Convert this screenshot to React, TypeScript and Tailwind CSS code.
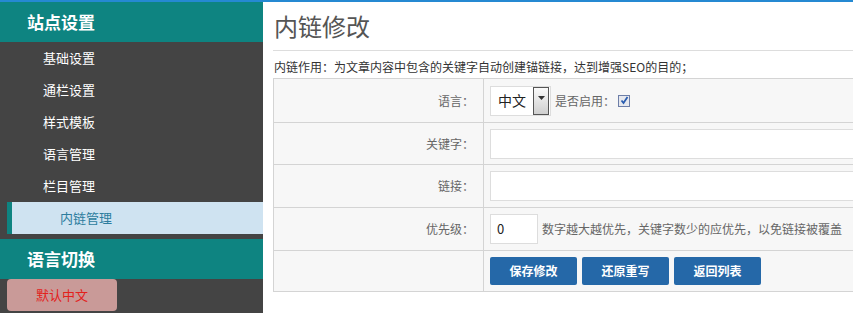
import React from "react";

const menu = ["基础设置", "通栏设置", "样式模板", "语言管理", "栏目管理"];

const Label: React.FC<{ text: string }> = ({ text }) => (
  <div className="flex items-center justify-end pr-[9px] border-r border-[#d4d4d4] text-[12px] text-[#666]">{text}</div>
);

const App: React.FC = () => {
  return (
    <div className="w-[853px] h-[313px] flex flex-col overflow-hidden bg-white font-['Noto_Sans_CJK_SC',sans-serif]">
      <div className="h-[2px] bg-[#2589d2]" />
      <div className="flex flex-1">
        {/* sidebar */}
        <div className="w-[263px] bg-[#444] flex flex-col">
          <div className="h-[40px] bg-[#0e8481] flex items-center pl-[27px] text-white text-[17px] font-bold">站点设置</div>
          {menu.map((m) => (
            <div key={m} className="h-[32px] flex items-center pl-[43px] text-white text-[13px]">
              {m}
            </div>
          ))}
          <div className="h-[32px] ml-[7px] border-l-[5px] border-[#0e8481] bg-[#cfe3f1] flex items-center pl-[48px] text-[13px] text-[#2d7d9e]">
            内链管理
          </div>
          <div className="h-[40px] mt-[5px] bg-[#0e8481] flex items-center pl-[27px] text-white text-[17px] font-bold">语言切换</div>
          <div className="ml-[7px] w-[110px] h-[32px] rounded-[4px] bg-[#c99a98] flex items-center justify-center text-[13px] text-[#e3211c]">
            默认中文
          </div>
        </div>

        {/* main */}
        <div className="flex-1 pl-[10px] overflow-hidden">
          <div className="h-[49px] border-b border-[#ddd] flex items-center pl-[1px] text-[24px] text-[#555] w-[600px]">内链修改</div>
          <div className="h-[27px] flex items-end pb-[2px] pl-[1px] text-[12px] text-[#333]">
            内链作用：为文章内容中包含的关键字自动创建锚链接，达到增强SEO的目的；
          </div>
          <div className="w-[600px] border border-[#d4d4d4] bg-[#f7f7f7] grid grid-cols-[210px_1fr] grid-rows-[43px_42px_43px_43px_41px]">
            <Label text="语言：" />
            <div className="flex items-center pl-[6px]">
              <div className="w-[61px] h-[30px] bg-white border border-[#ddd] flex items-center justify-between pl-[7px] pr-[1px]">
                <span className="text-[14px] text-[#222]">中文</span>
                <span className="w-[16px] h-[28px] border border-[#555] bg-gradient-to-b from-[#fafafa] to-[#cfcfcf] flex items-start justify-center pt-[8px]">
                  <svg width="7" height="4" viewBox="0 0 7 4"><path d="M0 0h7L3.5 4z" fill="#333" /></svg>
                </span>
              </div>
              <span className="ml-[4px] text-[12px] text-[#666]">是否启用：</span>
              <span className="ml-[3px] w-[12px] h-[12px] border border-[#6d7ea8] bg-[#e6e8ee] flex items-center justify-center">
                <svg width="9" height="9" viewBox="0 0 9 9"><path d="M1.5 4.5l2 2.5L7.5 1" fill="none" stroke="#2a5db0" strokeWidth="1.8" /></svg>
              </span>
            </div>

            <div className="col-span-2 grid grid-cols-[210px_1fr] border-t border-[#d4d4d4]">
              <Label text="关键字：" />
              <div className="flex items-center pl-[6px]">
                <div className="w-full h-[30px] bg-white border border-[#ddd]" />
              </div>
            </div>

            <div className="col-span-2 grid grid-cols-[210px_1fr] border-t border-[#d4d4d4]">
              <Label text="链接：" />
              <div className="flex items-center pl-[6px]">
                <div className="w-full h-[30px] bg-white border border-[#ddd]" />
              </div>
            </div>

            <div className="col-span-2 grid grid-cols-[210px_1fr] border-t border-[#d4d4d4]">
              <Label text="优先级：" />
              <div className="flex items-center pl-[6px]">
                <div className="w-[48px] h-[30px] bg-white border border-[#ddd] flex items-center pl-[6px] text-[13px] text-[#222]">0</div>
                <span className="ml-[4px] text-[12px] text-[#666]">数字越大越优先，关键字数少的应优先，以免链接被覆盖</span>
              </div>
            </div>

            <div className="col-span-2 grid grid-cols-[210px_1fr] border-t border-[#d4d4d4]">
              <div className="border-r border-[#d4d4d4]" />
              <div className="flex items-center pl-[6px] gap-[5px]">
                {["保存修改", "还原重写", "返回列表"].map((b) => (
                  <div key={b} className="w-[87px] h-[28px] rounded-[2px] bg-[#2568a8] flex items-center justify-center text-white text-[12px] font-bold">
                    {b}
                  </div>
                ))}
              </div>
            </div>
          </div>
        </div>
      </div>
    </div>
  );
};

export default App;
